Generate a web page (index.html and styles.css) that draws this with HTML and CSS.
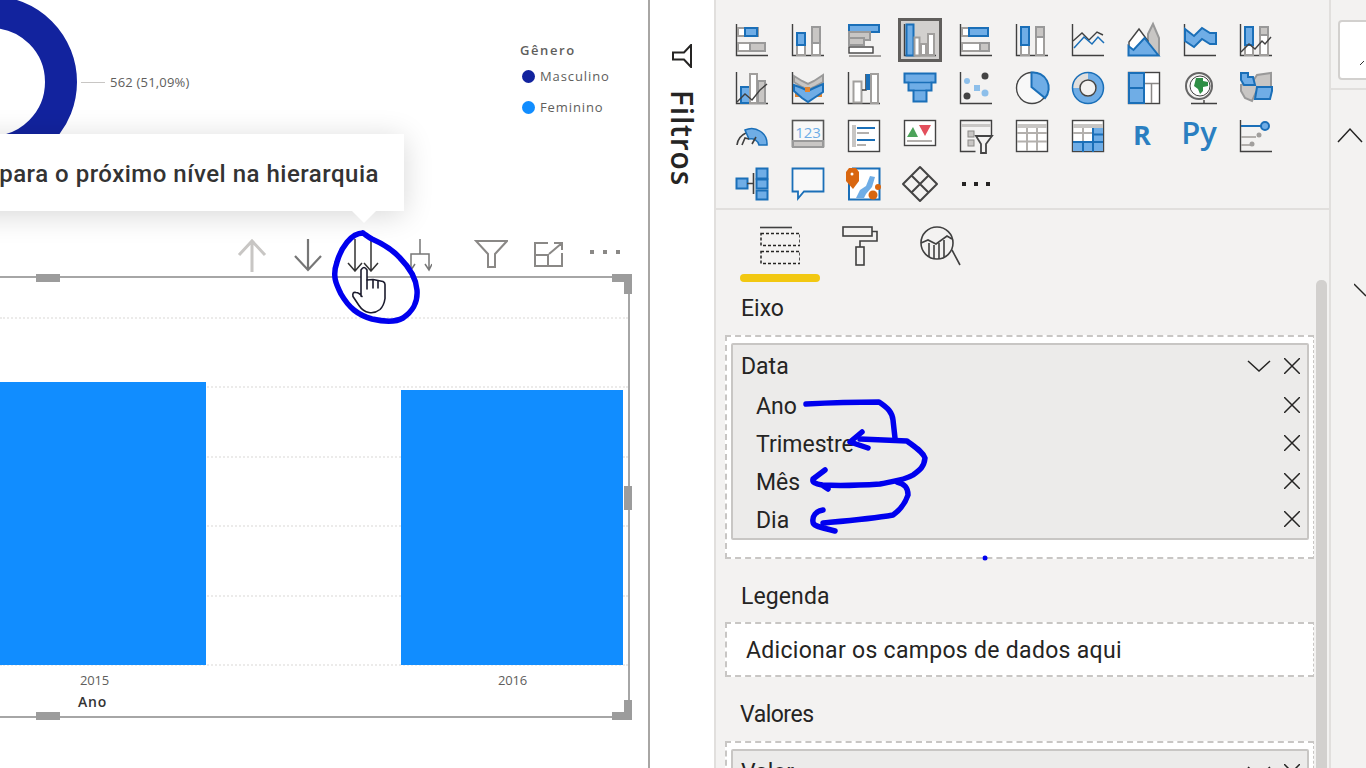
FILE: index.html
```html
<!DOCTYPE html>
<html lang="pt-BR">
<head>
  <meta charset="UTF-8" />
  <title>Power BI - Hierarquia</title>
  <link rel="stylesheet" href="styles.css">
</head>
<body>

  <!-- report canvas -->
  <main class="canvas">
    <section class="donut-visual">
      <svg class="donut" width="106" height="134" viewBox="0 0 106 134">
        <circle class="donut-ring" cx="-9" cy="82" r="70" />
        <path class="donut-leader" d="M81 82.5h24" />
      </svg>
      <span class="donut-label">562 (51,09%)</span>
      <div class="legend">
        <div class="legend-title">Gênero</div>
        <div class="legend-item"><i class="dot dot-navy"></i>Masculino</div>
        <div class="legend-item"><i class="dot dot-blue"></i>Feminino</div>
      </div>
    </section>

    <div class="tooltip"><span>para o próximo nível na hierarquia</span></div>

    <div class="visual-tools">
      <svg class="tool tool-up" width="30" height="34" viewBox="0 0 30 34"><path d="M15 34V3M2 17 15 3l13 14" /></svg>
      <svg class="tool tool-down" width="30" height="34" viewBox="0 0 30 34"><path d="M15 1v31M2 18l13 14 13-14" /></svg>
      <svg class="tool tool-double" width="32" height="34" viewBox="0 0 32 34"><path d="M8 1v32M1 25l7 8 7-8M24 1v32M17 25l7 8 7-8" /></svg>
      <svg class="tool tool-fork" width="24" height="34" viewBox="0 0 24 34"><path d="M12 1v15M3 32V16h18v16M0 26l3 6 4-6M17 26l4 6 3-6" /></svg>
      <svg class="tool tool-filter" width="34" height="30" viewBox="0 0 34 30"><path d="M2 2h31L21 15v13h-7V15z" /></svg>
      <svg class="tool tool-focus" width="30" height="26" viewBox="0 0 30 26"><path d="M14 1H1v23h27V11M1 13h13v11M15 12 28 1M20 1h8v7" /></svg>
      <div class="tool-dots"><i></i><i></i><i></i></div>
    </div>

    <section class="bar-visual">
      <div class="grid-lines"><i></i><i></i><i></i><i></i><i></i><i></i></div>
      <div class="plot">
        <div class="bar bar-2015"></div>
        <div class="bar bar-2016"></div>
      </div>
      <div class="x-labels">
        <span class="x-2015">2015</span>
        <span class="x-2016">2016</span>
      </div>
      <div class="x-title">Ano</div>
      <i class="handle handle-top"></i>
      <i class="handle handle-bottom"></i>
      <i class="handle handle-right"></i>
      <svg class="corner corner-top" width="20" height="20" viewBox="0 0 20 20"><path d="M0 0h20v20h-8V8H0z" /></svg>
      <svg class="corner corner-bottom" width="20" height="20" viewBox="0 0 20 20"><path d="M12 0h8v20H0v-8h12z" /></svg>
    </section>
  </main>

  <!-- collapsed filters -->
  <aside class="filters">
    <svg class="filters-icon" width="20" height="24" viewBox="0 0 20 24"><path d="M1 8.500h11L19 1v22l-7-7.500H1z" /></svg>
    <div class="filters-text">Filtros</div>
  </aside>

  <!-- visualizations pane -->
  <section class="viz-pane">
    <div class="gallery">
      <svg class="ico" viewBox="0 0 32 32"><path class="k" d="M.5 0v31.5H32" /><rect class="w" x="2" y="4" width="20" height="8" /><rect class="b" x="9" y="4" width="12" height="8" /><rect class="w" x="2" y="19" width="27" height="8" /><rect class="g" x="14" y="19" width="15" height="8" /></svg>
      <svg class="ico" viewBox="0 0 32 32"><path class="k" d="M.5 0v31.5H32" /><rect class="w" x="5" y="21" width="8" height="10" /><rect class="b" x="5" y="9" width="8" height="12" /><rect class="w" x="20" y="19" width="8" height="12" /><rect class="g" x="20" y="3" width="8" height="16" /></svg>
      <svg class="ico" viewBox="0 0 32 32"><rect class="w" x="1" y="1" width="30" height="7" /><rect class="b" x="1" y="1" width="30" height="7" /><rect class="g" x="1" y="8" width="21" height="8" /><rect class="g" x="1" y="14" width="15" height="7" /><rect class="kw" x="1" y="23" width="24" height="6" /><path class="m2" d="M1 32h32" /></svg>
      <svg class="ico ico-selected" viewBox="-6 -6 44 44"><rect class="sel" x="-4.500" y="-4.500" width="41" height="41" /><path class="k" d="M.5 0v31.500H32" /><rect class="b" x="2.500" y=".5" width="7" height="31" /><rect class="w" x="10.500" y="13.500" width="5" height="18" /><rect class="w" x="17" y="20" width="5" height="11" /><rect class="w" x="24" y="10" width="6" height="21" /></svg>
      <svg class="ico" viewBox="0 0 32 32"><path class="k" d="M.5 0v31.5H32" /><rect class="w" x="2" y="4" width="7" height="8" /><rect class="b" x="9" y="4" width="19" height="8" /><rect class="w" x="2" y="19" width="18" height="8" /><rect class="g" x="20" y="19" width="9" height="8" /></svg>
      <svg class="ico" viewBox="0 0 32 32"><path class="k" d="M.5 0v31.5H32" /><rect class="w" x="5" y="21" width="8" height="10" /><rect class="b" x="5" y="3" width="8" height="18" /><rect class="w" x="20" y="13" width="8" height="18" /><rect class="g" x="20" y="3" width="8" height="10" /></svg>
      <svg class="ico" viewBox="0 0 32 32"><path class="k" d="M.5 0v31.5H32" /><path class="k" d="M1 17 10 9l7 7 8-8 6 3" /><path class="bl" d="M2 24 12 13l8 7 6-7 6 6" /></svg>
      <svg class="ico" viewBox="0 0 32 32"><path class="g" d="M20 10 25 0l6 14v17H20z" /><path class="kw" d="M1 18 11 5l9 12-3 14H1z" /><path class="b" d="M.5 31.500V22l5 4 11-12 14 17.500z" /></svg>
      <svg class="ico" viewBox="0 0 32 32"><path class="k" d="M.5 0v31.5H32" /><path class="b" d="M1 5l9 7 8-8 8 5h6v11h-6l-8-5-8 8-9-6z" /></svg>
      <svg class="ico" viewBox="0 0 32 32"><path class="k" d="M.5 0v31.5H32" /><rect class="w" x="5" y="21" width="8" height="10" /><rect class="b" x="5" y="3" width="8" height="18" /><rect class="w" x="20" y="11" width="8" height="20" /><rect class="g" x="20" y="3" width="8" height="8" /><path class="k" d="M1 28l8-8 6 5 7-8 3 3 6-7" /></svg>

      <svg class="ico" viewBox="0 0 32 32"><path class="k" d="M.5 0v31.5H32" /><rect class="b" x="5" y="15" width="9" height="16" /><rect class="w" x="14" y="2" width="7" height="29" /><rect class="g" x="22" y="9" width="7" height="22" /><path class="k" d="M1 30l8-8 7 6 8-10 7-6" /></svg>
      <svg class="ico" viewBox="0 0 32 32"><path class="k" d="M.5 0v31.5H32" /><path class="g" d="M2 4l8 5 6 3 6-3 9-6v7l-9 5-6 3-6-3-8-5z" /><rect class="o" x="3" y="21" width="7" height="4" /><rect class="o" x="22" y="21" width="8" height="4" /><path class="b" d="M2 13l8 3 6 3 6-3 9-4v8l-9 6-6 4-6-4-8-7z" /><rect class="o" x="13" y="15" width="5" height="5" /></svg>
      <svg class="ico" viewBox="0 0 32 32"><path class="k" d="M.5 0v31.5H32" /><rect class="w" x="5.500" y="9.500" width="8" height="21" /><path class="k2" d="M14 18h4v-16" /><rect class="bd" x="18" y="2" width="4" height="16" /><rect class="w" x="23" y="2" width="7" height="29" /></svg>
      <svg class="ico" viewBox="0 0 32 32"><path class="b" d="M.5 1.500h31v9h-4v8h-5v11h-13v-11h-5v-8h-4z" /><path class="bl" d="M4.500 10.500h23M9.500 18.500h13" /></svg>
      <svg class="ico" viewBox="0 0 32 32"><path class="k" d="M.5 0v31.500H32" /><circle class="s" cx="7" cy="9" r="3" /><rect class="s" x="14" y="13" width="6" height="6" /><circle class="s" cx="25" cy="21" r="3.500" /><circle class="d" cx="25" cy="4" r="3.500" /><circle class="d" cx="7" cy="24" r="3.500" /></svg>

      <svg class="ico" viewBox="0 0 32 32"><circle class="pie" cx="16" cy="16" r="15.500" /><path class="b" d="M15.500 .5A15.500 15.500 0 0 1 29 26l-13.500-11z" /></svg>
      <svg class="ico" viewBox="0 0 32 32"><circle class="donut-grey" cx="16" cy="16" r="12" /><path class="donut-part" d="M16 4A12 12 0 1 1 4 16" /><circle class="donut-edge" cx="16" cy="16" r="15.500" /><circle class="donut-hole" cx="16" cy="16" r="8" /></svg>
      <svg class="ico" viewBox="0 0 32 32"><rect class="kw" x=".5" y=".5" width="31" height="31" /><path class="m" d="M16 11.500h15M23.500 12v19" /><rect class="b" x="1" y="1" width="15" height="15" /><rect class="b" x="1" y="16" width="15" height="15" /></svg>
      <svg class="ico" viewBox="0 0 32 32"><circle class="globe-out" cx="15" cy="14" r="13" /><circle class="globe" cx="16" cy="14" r="10" /><path class="land" d="M12 6h7v3l5 1v4l-5 1v4l-3 3-2-5-4-3z" /><path class="k" d="M7 31.500h26M20 28v3" /></svg>
      <svg class="ico" viewBox="0 0 32 32"><path class="g" d="M1 13l12-4 4-6 14-2v14l-15 5-4 9-7-3-4-7z" /><path class="b" d="M1 1h7v4h5l2 8H4L1 8z" /><path class="b" d="M17 15h15v4l-2 8H15z" /></svg>

      <svg class="ico" viewBox="0 0 32 32"><path class="k2" d="M1 25a15 15 0 0 1 9-12" /><path class="gauge" d="M9 10a15.500 15.500 0 0 1 22 15h-8a8 8 0 0 0-10-6z" /><path class="k2" d="M6 25l3-7 4 1M16 24l4-7" /></svg>
      <svg class="ico" viewBox="0 0 32 32"><rect class="kg" x=".5" y=".5" width="31" height="26" /><rect class="g" x="1" y="21" width="30" height="6" /><text class="num" x="16" y="18">123</text></svg>
      <svg class="ico" viewBox="0 0 32 32"><rect class="kw" x=".5" y=".5" width="31" height="31" /><rect class="gf" x="4" y="5" width="4" height="22" /><path class="bl2" d="M9 8h18M9 20h18" /><path class="g-l" d="M9 13h12M9 25h9" /></svg>
      <svg class="ico" viewBox="0 0 32 32"><rect class="kw" x=".5" y=".5" width="31" height="25" /><path class="tri-g" d="M9 7l5 10H3z" /><path class="tri-r" d="M15 5h12l-6 11z" /><path class="g-l" d="M3 21h25" /></svg>
      <svg class="ico" viewBox="0 0 32 32"><path class="k" d="M31.500 17V.5H.5v31h15" /><rect class="gf" x="1" y="4" width="30" height="3" /><rect class="s2" x="8" y="11" width="6" height="6" /><rect class="s2" x="8" y="20" width="6" height="6" /><path class="kw2" d="M16 16h16l-6 8v9h-5v-9z" /></svg>

      <svg class="ico" viewBox="0 0 32 32"><rect class="kw" x=".5" y=".5" width="31" height="31" /><rect class="gf" x="1" y="4" width="30" height="4" /><path class="g-l" d="M1 13h30M1 21.500h30M11 8v23M21 8v23" /></svg>
      <svg class="ico" viewBox="0 0 32 32"><rect class="kw" x=".5" y=".5" width="31" height="31" /><rect class="gf" x="1" y="4" width="30" height="4" /><rect class="lb" x="1" y="22" width="30" height="9" /><rect class="lb" x="21" y="8" width="10" height="14" /><path class="g-l" d="M11 8v14M1 13h20" /><path class="bl2" d="M1 22h30M11 22v10M21 8v24M21 14.500h10" /></svg>
      <svg class="ico" viewBox="0 0 32 32"><text class="r-text" x="14" y="25">R</text></svg>
      <svg class="ico ico-py" viewBox="0 0 32 32"><text class="py-text" x="15" y="24">Py</text></svg>
      <svg class="ico" viewBox="0 0 32 32"><path class="k" d="M.5 0v31.500H32" /><path class="bl2" d="M1 6h20" /><circle class="key" cx="25" cy="6" r="4" /><path class="g-l" d="M1 17h15M1 25h9" /><circle class="key-g" cx="19" cy="15" r="2.500" /><circle class="key-g" cx="12" cy="24" r="2.500" /></svg>

      <svg class="ico" viewBox="0 0 32 32"><rect class="b" x=".5" y="10.500" width="11" height="10" /><path class="k2" d="M11 15.500h6M17.500 5v21" /><rect class="b" x="20.500" y=".5" width="11" height="10" /><rect class="b" x="20.500" y="11.500" width="11" height="9" /><rect class="b" x="20.500" y="22.500" width="11" height="9" /></svg>
      <svg class="ico" viewBox="0 0 32 32"><path class="qa" d="M.5 .5h31v23H12l-6 7v-7H.5z" /></svg>
      <svg class="ico" viewBox="0 0 32 32"><path class="qa2" d="M4 .5h27.500v31H1V14" /><path class="lb2" d="M8 30l4-8 6-4 4-10 5 1-3 10-6 7-2 4z" /><path class="pin" d="M-2 4l3-4h7l3 4v9l-6 8-7-8z" /><circle class="pin-dot" cx="4" cy="6" r="1.500" /><circle class="o-c" cx="30" cy="19" r="3" /><circle class="o-c" cx="25" cy="27" r="4.500" /></svg>
      <svg class="ico ico-apps" viewBox="0 0 36 36"><path class="k3" d="M18 1l17 17-17 17L1 18zM9.500 9.500l17 17M26.500 9.500l-17 17" /></svg>
      <div class="ico ico-more"><i></i><i></i><i></i></div>
    </div>

    <div class="tabs">
      <div class="tab tab-active">
        <svg width="40" height="40" viewBox="0 0 40 40"><path class="k2" d="M0 1.500h32" /><rect class="dash" x="1" y="7.500" width="39" height="12" /><rect class="dash" x="1" y="25.500" width="39" height="12" /></svg>
      </div>
      <div class="tab">
        <svg width="40" height="40" viewBox="0 0 40 40"><rect class="k2" x="3" y="1" width="29" height="9" /><path class="k2" d="M32 5.500h5V15H20v6" /><rect class="k2" x="16" y="21" width="8" height="18" /></svg>
      </div>
      <div class="tab">
        <svg width="42" height="40" viewBox="0 0 42 40"><circle class="k2" cx="18" cy="17" r="16" /><path class="k2" d="M2 17l7-3 8 4 11-8 5 3M33 24l8 15" /><path class="k2" d="M10 17v14M15 19v14M20 17v16M25 14v17" /></svg>
      </div>
    </div>

    <div class="well-label well-label-first">Eixo</div>
    <div class="well">
      <div class="field">
        <div class="field-row field-head">
          <span class="field-name">Data</span>
          <span class="field-actions">
            <svg class="chevron" width="24" height="12" viewBox="0 0 24 12"><path d="M1 1l11 10L23 1" /></svg>
            <svg class="close" width="16" height="16" viewBox="0 0 16 16"><path d="M0 0l16 16M16 0 0 16" /></svg>
          </span>
        </div>
        <div class="field-row field-sub"><span class="field-name">Ano</span><svg class="close" width="16" height="16" viewBox="0 0 16 16"><path d="M0 0l16 16M16 0 0 16" /></svg></div>
        <div class="field-row field-sub"><span class="field-name">Trimestre</span><svg class="close" width="16" height="16" viewBox="0 0 16 16"><path d="M0 0l16 16M16 0 0 16" /></svg></div>
        <div class="field-row field-sub"><span class="field-name">Mês</span><svg class="close" width="16" height="16" viewBox="0 0 16 16"><path d="M0 0l16 16M16 0 0 16" /></svg></div>
        <div class="field-row field-sub"><span class="field-name">Dia</span><svg class="close" width="16" height="16" viewBox="0 0 16 16"><path d="M0 0l16 16M16 0 0 16" /></svg></div>
      </div>
    </div>

    <div class="well-label well-label-second">Legenda</div>
    <div class="well well-empty">Adicionar os campos de dados aqui</div>

    <div class="well-label well-label-third">Valores</div>
    <div class="well">
      <div class="field">
        <div class="field-row field-head">
          <span class="field-name">Valor</span>
          <span class="field-actions">
            <svg class="chevron" width="24" height="12" viewBox="0 0 24 12"><path d="M1 1l11 10L23 1" /></svg>
            <svg class="close" width="16" height="16" viewBox="0 0 16 16"><path d="M0 0l16 16M16 0 0 16" /></svg>
          </span>
        </div>
      </div>
    </div>

    <div class="scrollbar"></div>
  </section>

  <!-- collapsed fields pane -->
  <aside class="fields-pane">
    <div class="search-box">
      <svg class="search-tip" width="4" height="6" viewBox="0 0 4 6"><path d="M0 5 4 1" /></svg>
    </div>
    <div class="fields-sep"></div>
    <svg class="fields-up" width="26" height="16" viewBox="0 0 26 16"><path d="M1 15 13 2l12 13" /></svg>
    <svg class="fields-down" width="12" height="14" viewBox="0 0 12 14"><path d="M0 1l12 12" /></svg>
  </aside>

  <!-- hand drawn notes on top of the screenshot -->
  <svg class="ink" width="1366" height="768" viewBox="0 0 1366 768">
    <path d="M363 233 C351 233 341 248 337 262 C332 276 336 284 341 294 C349 308 358 315 372 319 C385 322 396 322 403 318 C413 311 418 303 417 290 C416 278 408 266 400 258 C392 249 381 243 372 239 C368 237 366 235 363 233" />
    <path d="M806 404 C825 403 860 402 879 402 C888 408 892 412 893 420 L895 438" />
    <path d="M860 439 L907 441 C915 447 923 452 925 458 C924 467 920 470 913 475 C905 480 895 481 880 484 C865 485 840 486 822 485 C815 484 812 482 813 479 L825 470 M822 485 L828 489" />
    <path d="M862 432 L850 442 L868 448" />
    <path d="M897 482 C905 484 908 488 908 495 C905 504 900 510 893 515 C870 519 845 521 823 523 M823 510 C816 511 812 516 813 522 C813 526 820 527 835 531" />
    <circle class="ink-dot" cx="985" cy="558" r="2.500" />
    <g class="hand">
      <path d="M361 296V270q3-5 6 0v10l6-.5 5 1 5 1q2 1 2 3v14q-1 7-5 11-5 4-11 3-6-1-10-7l-6-9q-1-5 3-4 3 0 6 4z" />
      <path d="M367 280v9M373 280v8M378 281v7" />
    </g>
  </svg>

</body>
</html>
```

FILE: styles.css
```css
* {
  box-sizing: border-box;
}

html, body {
  margin: 0;
  height: 768px;
  overflow: hidden;
}

body {
  position: relative;
  display: flex;
  font-family: 'Open Sans', sans-serif;
  color: #252423;
  background: #fff;
}

/* canvas */
.canvas {
  position: relative;
  width: 650px;
  height: 768px;
  border-right: 2px solid #a8a6a4;
  background: #fff;
  flex: none;
}

.donut-visual {
  height: 238px;
  display: flex;
  align-items: flex-start;
}

.donut-ring {
  fill: none;
  stroke: #12239e;
  stroke-width: 32;
}

.donut-leader {
  stroke: #c8c6c4;
  stroke-width: 1;
}

.donut-label {
  margin: 73px 0 0 4px;
  width: 410px;
  font-size: 13px;
  line-height: 18px;
  color: #605e5c;
  letter-spacing: 0.2px;
}

.legend {
  margin-top: 41px;
  font-size: 13px;
  color: #605e5c;
}

.legend-title {
  font-weight: 600;
  line-height: 18px;
  margin-bottom: 8px;
  letter-spacing: 1.6px;
}

.legend-item {
  display: flex;
  align-items: center;
  gap: 5px;
  height: 18px;
  margin: 0 0 13px 2px;
  letter-spacing: 0.9px;
}

.dot {
  width: 13px;
  height: 13px;
  border-radius: 50%;
}

.dot-navy {
  background: #12239e;
}

.dot-blue {
  background: #118dff;
}

.tooltip {
  position: absolute;
  z-index: 2;
  left: -40px;
  top: 134px;
  width: 444px;
  height: 77px;
  padding: 2px 25px 0 0;
  display: flex;
  align-items: center;
  justify-content: flex-end;
  background: #fff;
  box-shadow: 0 4px 30px rgba(0, 0, 0, 0.16);
  font-family: Roboto, sans-serif;
  font-size: 24px;
  font-weight: 500;
  letter-spacing: 0.5px;
  color: #333;
}

.tooltip::after {
  content: "";
  position: absolute;
  left: 392px;
  top: 77px;
  border: 12px solid transparent;
  border-top-color: #fff;
  border-bottom: 0;
}

.visual-tools {
  position: relative;
  height: 38px;
}

.tool {
  position: absolute;
  top: 0;
  fill: none;
  stroke-width: 2;
}

.tool-up {
  left: 237px;
  stroke: #c8c6c4;
  stroke-width: 3;
}

.tool-down {
  left: 293px;
  stroke: #767676;
  stroke-width: 2.2;
}

.tool-double {
  left: 347px;
  stroke: #333;
  stroke-width: 1.5;
}

.tool-fork {
  left: 408px;
  stroke: #777;
  stroke-width: 1.5;
}

.tool-filter {
  left: 474px;
  top: 1px;
  stroke: #8a8886;
}

.tool-focus {
  left: 534px;
  top: 4px;
  stroke: #8a8886;
}

.tool-dots {
  position: absolute;
  left: 590px;
  top: 12px;
  display: flex;
  gap: 9px;
}

.tool-dots i {
  width: 4px;
  height: 4px;
  background: #8a8886;
}

.bar-visual {
  position: relative;
  margin-left: -2px;
  width: 632px;
  height: 442px;
  border: 2px solid #a6a6a6;
}

.grid-lines {
  position: absolute;
  left: 0;
  right: 0;
  top: 39px;
  height: 349px;
  display: flex;
  flex-direction: column;
  justify-content: space-between;
}

.grid-lines i {
  border-top: 2px dotted #ecebea;
}

.plot {
  position: relative;
  height: 387px;
  display: flex;
  align-items: flex-end;
}

.bar {
  background: #118dff;
}

.bar-2015 {
  width: 206px;
  height: 283px;
}

.bar-2016 {
  width: 222px;
  height: 275px;
  margin-left: 195px;
}

.x-labels {
  position: relative;
  height: 30px;
  font-size: 13px;
  line-height: 30px;
  color: #605e5c;
  letter-spacing: -0.2px;
}

.x-labels span {
  position: absolute;
}

.x-2015 {
  left: 80px;
}

.x-2016 {
  left: 498px;
}

.x-title {
  padding-left: 78px;
  font-size: 14px;
  font-weight: 600;
  line-height: 14px;
  color: #333;
  letter-spacing: 0.8px;
}

.handle {
  position: absolute;
  background: #9c9c9c;
}

.handle-top {
  left: 36px;
  top: -4px;
  width: 24px;
  height: 8px;
}

.handle-bottom {
  left: 36px;
  bottom: -4px;
  width: 24px;
  height: 8px;
}

.handle-right {
  right: -4px;
  top: 208px;
  width: 8px;
  height: 24px;
}

.corner {
  position: absolute;
  right: -4px;
  fill: #9c9c9c;
}

.corner-top {
  top: -4px;
}

.corner-bottom {
  bottom: -4px;
}

/* filters strip */
.filters {
  width: 66px;
  flex: none;
  border-right: 2px solid #e1dfdd;
  display: flex;
  flex-direction: column;
  align-items: center;
  padding-top: 44px;
}

.filters-icon {
  fill: none;
  stroke: #252423;
  stroke-width: 2;
}

.filters-text {
  margin-top: 22px;
  writing-mode: vertical-rl;
  font-size: 30px;
  font-weight: 600;
  line-height: 36px;
  letter-spacing: 0.8px;
}

/* visualizations pane */
.viz-pane {
  position: relative;
  width: 615px;
  flex: none;
  background: #f3f2f1;
  border-right: 2px solid #e1dfdd;
}

.gallery {
  height: 192px;
  margin-top: 16px;
  padding-left: 8px;
  display: grid;
  grid-template-columns: repeat(10, 56px);
  grid-auto-rows: 48px;
  align-items: center;
  justify-items: center;
}

.gallery + .tabs {
  border-top: 2px solid #e1dfdd;
}

.ico {
  width: 32px;
  height: 32px;
  overflow: visible;
}

.ico-selected {
  width: 44px;
  height: 44px;
}

.ico-apps {
  width: 36px;
  height: 36px;
}

.ico-more {
  display: flex;
  align-items: center;
  justify-content: center;
  gap: 8px;
}

.ico-more i {
  width: 4px;
  height: 4px;
  background: #252423;
}

.k { fill: none; stroke: #404040; stroke-width: 1.4; }
.k2 { fill: none; stroke: #404040; stroke-width: 1.6; }
.k3 { fill: none; stroke: #444; stroke-width: 2; stroke-linejoin: round; }
.m { fill: none; stroke: #8a8886; stroke-width: 1.5; }
.m2 { fill: none; stroke: #a19f9d; stroke-width: 2; }
.w { fill: #fff; stroke: #a19f9d; stroke-width: 2; }
.g { fill: #c8c6c4; stroke: #999; stroke-width: 2; }
.b { fill: #6fade6; stroke: #1a6fb8; stroke-width: 2; }
.bd { fill: #1a6fb8; }
.bl { fill: none; stroke: #1a6fb8; stroke-width: 1.5; }
.bl2 { fill: none; stroke: #1a6fb8; stroke-width: 2; }
.kw { fill: #fff; stroke: #444; stroke-width: 1.4; }
.kw2 { fill: #f3f2f1; stroke: #444; stroke-width: 1.8; }
.kg { fill: #f8f8f8; stroke: #555; stroke-width: 1.6; }
.sel { fill: #d2d0ce; stroke: #605e5c; stroke-width: 3; }
.o { fill: #e2852f; }
.s { fill: #8dbfea; }
.s2 { fill: #c8c6c4; stroke: #8a8886; }
.d { fill: #444; }
.pie { fill: #f8f8f8; stroke: #444; stroke-width: 1.4; }
.donut-grey { fill: none; stroke: #e1dfdd; stroke-width: 7; }
.donut-part { fill: none; stroke: #6fade6; stroke-width: 7; }
.donut-edge { fill: none; stroke: #1a6fb8; stroke-width: 1.5; }
.donut-hole { fill: none; stroke: #444; stroke-width: 1.5; }
.globe-out { fill: none; stroke: #666; stroke-width: 2; }
.globe { fill: #fff; stroke: #444; }
.land { fill: #2f8f46; }
.gauge { fill: #6fade6; stroke: #1a6fb8; stroke-width: 1.5; }
.num { font-size: 15px; fill: #6fade6; text-anchor: middle; }
.gf { fill: #c8c6c4; }
.g-l { fill: none; stroke: #b3b0ad; stroke-width: 2; }
.tri-g { fill: #4ca35a; }
.tri-r { fill: #e34f5c; }
.lb { fill: #6fade6; }
.lb2 { fill: #6fade6; }
.r-text { font-family: 'Open Sans', sans-serif; font-weight: 700; font-size: 27px; fill: #2a7fc1; text-anchor: middle; }
.py-text { font-family: 'Open Sans', sans-serif; font-weight: 600; font-size: 31px; fill: #2a7fc1; text-anchor: middle; }
.key { fill: #6fade6; stroke: #1a6fb8; stroke-width: 2; }
.key-g { fill: #a19f9d; }
.qa { fill: #f8f8f8; stroke: #1a6fb8; stroke-width: 1.8; }
.qa2 { fill: #fff; stroke: #1a6fb8; stroke-width: 2; }
.pin { fill: #d9660f; }
.pin-dot { fill: #fff; }
.o-c { fill: #d9660f; }

.tabs {
  height: 74px;
  padding-left: 24px;
  display: flex;
}

.tab {
  width: 80px;
  padding-top: 16px;
  display: flex;
  justify-content: center;
  align-items: flex-start;
  position: relative;
}

.tab-active::after {
  content: "";
  position: absolute;
  left: 0;
  right: 0;
  bottom: 0;
  height: 8px;
  border-radius: 4px;
  background: #f2c811;
}

.dash {
  fill: none;
  stroke: #252423;
  stroke-width: 1.5;
  stroke-dasharray: 3 2;
}

.well-label {
  padding-left: 25px;
  font-family: Roboto, sans-serif;
  font-size: 23px;
  line-height: 30px;
}

.well-label-first {
  padding-top: 12px;
  height: 53px;
}

.well-label-second {
  padding-top: 23px;
  height: 63px;
  letter-spacing: 0.1px;
}

.well-label-third {
  padding-top: 23px;
  height: 64px;
  padding-left: 24px;
  letter-spacing: -0.5px;
}

.well {
  margin-left: 9px;
  width: 589px;
  padding: 6px 4px 17px;
  background: #fff;
  border: 2px dashed #c8c6c4;
  border-right-width: 1px;
}

.well-empty {
  height: 55px;
  padding: 1px 0 0 19px;
  font-family: Roboto, sans-serif;
  font-size: 23px;
  line-height: 51px;
  letter-spacing: 0.3px;
}

.field {
  background: #ecebea;
  border: 2px solid #c8c6c4;
  border-radius: 2px;
}

.field-row {
  height: 38px;
  padding: 0 7px 0 8px;
  display: flex;
  align-items: center;
  justify-content: space-between;
  font-family: Roboto, sans-serif;
  font-size: 23px;
}

.field-name {
  padding-top: 2px;
}

.field-head {
  height: 41px;
}

.field-sub {
  padding-left: 23px;
}

.field-actions {
  display: flex;
  align-items: center;
  gap: 13px;
}

.chevron {
  fill: none;
  stroke: #252423;
  stroke-width: 1.5;
}

.close {
  fill: none;
  stroke: #252423;
  stroke-width: 1.5;
}

.scrollbar {
  position: absolute;
  left: 600px;
  top: 280px;
  width: 11px;
  bottom: 0;
  background: #d2d0ce;
  border-radius: 5px 5px 0 0;
}

/* fields pane */
.fields-pane {
  position: relative;
  flex: 1;
  background: #f3f2f1;
  padding-top: 20px;
}

.search-box {
  position: relative;
  margin-left: 7px;
  width: 60px;
  height: 60px;
  background: #fff;
  border: 2px solid #d2d0ce;
  border-radius: 4px;
}

.search-tip {
  position: absolute;
  left: 20px;
  top: 38px;
  fill: none;
  stroke: #333;
}

.fields-sep {
  height: 2px;
  margin-top: 8px;
  background: #e1dfdd;
}

.fields-up,
.fields-down {
  position: absolute;
  fill: none;
  stroke: #252423;
  stroke-width: 1.5;
}

.fields-up {
  left: 6px;
  top: 127px;
}

.fields-down {
  left: 23px;
  top: 283px;
}

/* hand drawn notes */
.ink {
  position: absolute;
  z-index: 5;
  left: 0;
  top: 0;
  fill: none;
  stroke: #0000ee;
  stroke-width: 5.5;
  stroke-linecap: round;
  stroke-linejoin: round;
  pointer-events: none;
}

.ink-dot {
  fill: #0000ee;
  stroke: none;
}

.hand path {
  fill: #fff;
  stroke: #1c1c2e;
  stroke-width: 1.6;
}

.hand path + path {
  fill: none;
}
```
